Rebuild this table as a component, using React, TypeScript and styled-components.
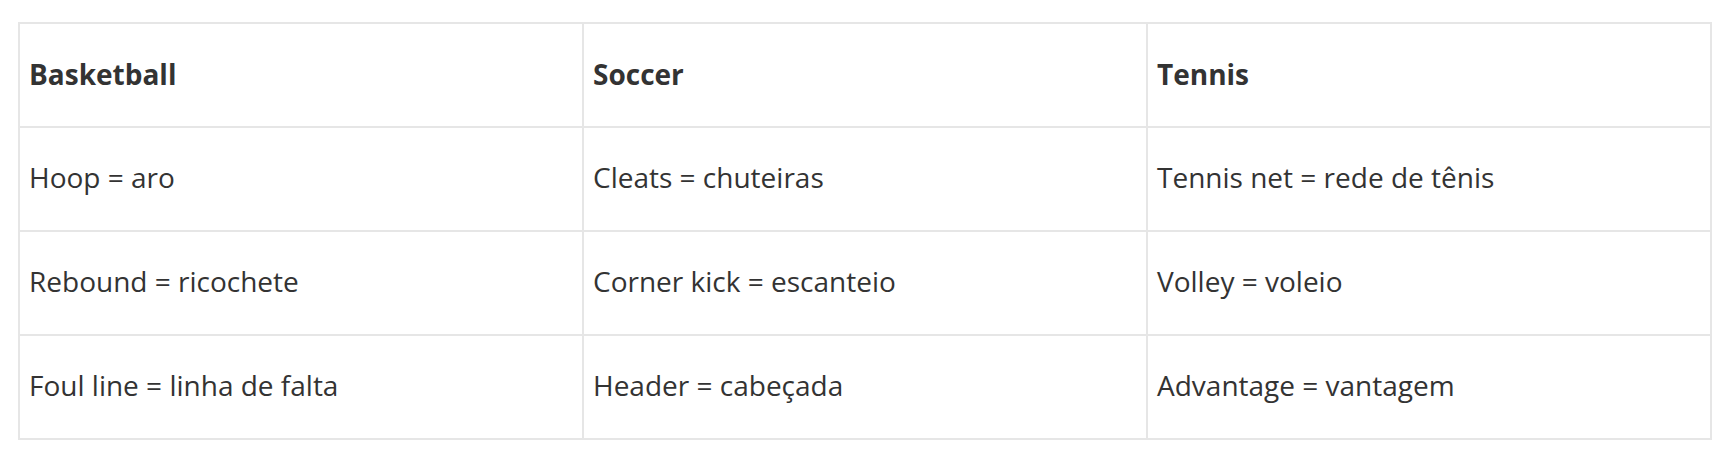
import React from "react";
import styled, { createGlobalStyle } from "styled-components";

const GlobalStyle = createGlobalStyle`
  html, body {
    margin: 0;
    padding: 0;
    background: #ffffff;
  }
`;

const columns = ["Basketball", "Soccer", "Tennis"];

const rows = [
  ["Hoop = aro", "Cleats = chuteiras", "Tennis net = rede de tênis"],
  ["Rebound = ricochete", "Corner kick = escanteio", "Volley = voleio"],
  ["Foul line = linha de falta", "Header = cabeçada", "Advantage = vantagem"],
];

const App: React.FC = () => {
  return (
    <Page>
      <GlobalStyle />
      <Table>
        <thead>
          <tr>
            {columns.map((c) => (
              <HeadCell key={c}>{c}</HeadCell>
            ))}
          </tr>
        </thead>
        <tbody>
          {rows.map((row, i) => (
            <tr key={i}>
              {row.map((cell) => (
                <Cell key={cell}>{cell}</Cell>
              ))}
            </tr>
          ))}
        </tbody>
      </Table>
    </Page>
  );
};

const Page = styled.div`
  padding: 22px 18px;
  font-family: "Open Sans", "Liberation Sans", sans-serif;
  color: #333333;
`;

const Table = styled.table`
  width: 100%;
  border-collapse: collapse;
  table-layout: fixed;
  border: 2px solid #e6e6e6;
`;

const Cell = styled.td`
  border: 2px solid #e6e6e6;
  padding: 28px 9px 32px;
  font-size: 28px;
  line-height: 42px;
  font-weight: 400;
  text-align: left;
  vertical-align: top;
`;

const HeadCell = styled(Cell).attrs({ as: "th" })`
  font-weight: 700;
  padding: 29px 9px 31px;
`;

export default App;
